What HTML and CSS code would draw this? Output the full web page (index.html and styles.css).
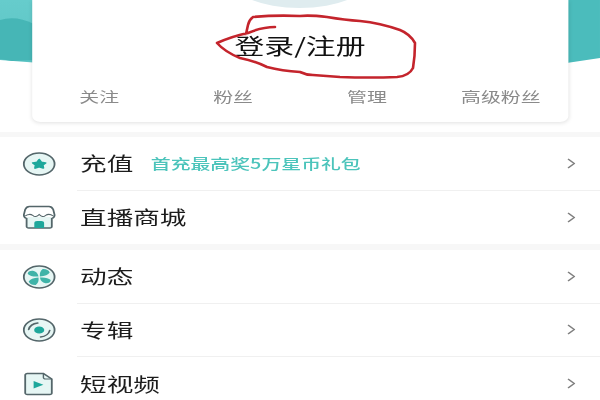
FILE: index.html
```html
<!DOCTYPE html>
<html lang="zh">
<head>
<meta charset="utf-8">
<title>我的</title>
<link rel="stylesheet" href="styles.css">
</head>
<body>
<div class="page">
  <header class="hero">
    <svg class="hero-bg" viewBox="0 0 600 70" preserveAspectRatio="none">
      <defs>
        <linearGradient id="lt" x1="0" y1="0" x2="0" y2="1">
          <stop offset="0" stop-color="#66cccc"/>
          <stop offset="1" stop-color="#5cc4c4"/>
        </linearGradient>
      </defs>
      <path d="M0 0H40V63L0 60Z" fill="url(#lt)"/>
      <path d="M0 20Q16 15 34 24V60L12 61L0 59Z" fill="#46b6b6"/>
      <path d="M560 0H600V58L560 64Z" fill="#4bbcbc"/>
    </svg>
    <div class="avatar"></div>
    <section class="card">
      <div class="title">登录/注册</div>
      <div class="stats">
        <span>关注</span>
        <span>粉丝</span>
        <span>管理</span>
        <span>高级粉丝</span>
      </div>
    </section>
  </header>

  <section class="group">
    <div class="row">
      <svg class="icon" viewBox="0 0 24 24">
        <circle class="ic-ring" cx="12" cy="12" r="11"/>
        <path class="ic-star" d="M12 7.500l1.500 2.800 3 .6-2 2.200.4 3-2.900-1.300-2.900 1.300.4-3-2-2.200 3-.6z"/>
      </svg>
      <div class="row-body">
        <span class="label">充值</span>
        <span class="promo">首充最高奖5万星币礼包</span>
        <svg class="chev" viewBox="0 0 8 14"><path d="M1 1l6 6-6 6"/></svg>
      </div>
    </div>
    <div class="row">
      <svg class="icon" viewBox="0 0 24 24">
        <path class="ic-fill" d="M3 12h18v9.500a1.500 1.500 0 0 1-1.500 1.500h-15a1.500 1.500 0 0 1-1.500-1.500z"/>
        <path class="ic-line" d="M5 1.500h14q2 0 3 3l1 5.500q0 2.500-2 3.500v8a1.500 1.500 0 0 1-1.500 1.500h-15a1.500 1.500 0 0 1-1.500-1.500v-8q-2-1-2-3.500l1-5.500q1-3 3-3z"/>
        <path class="ic-thin" d="M2 11q3-3 5.500-.5q2 2.500 4.500-1q2.500 3.500 4.500 1q2.500-2.500 5.500.5"/>
        <path class="ic-solid" d="M8.500 23v-5q0-2 2-2h3q2 0 2 2v5z"/>
      </svg>
      <div class="row-body row-last">
        <span class="label">直播商城</span>
        <svg class="chev" viewBox="0 0 8 14"><path d="M1 1l6 6-6 6"/></svg>
      </div>
    </div>
  </section>

  <section class="group">
    <div class="row">
      <svg class="icon" viewBox="0 0 24 24">
        <circle class="ic-ring" cx="12" cy="12" r="11"/>
        <path class="ic-soft" d="M11.500 11.500Q6 12 3.800 9Q4 5.500 7.500 5.800Q11 7 11.500 11.500z"/>
        <path class="ic-soft" d="M12.500 11.500Q12 6.500 14.500 4Q18.500 3.800 19.500 7.500Q18 11 12.500 11.500z"/>
        <path class="ic-soft" d="M12.500 12.500Q18 12 20.200 15Q20 18.500 16.500 18.200Q13 17 12.500 12.500z"/>
        <path class="ic-soft" d="M11.500 12.500Q12 17.500 9.500 20Q5.500 20.200 4.500 16.500Q6 13 11.500 12.500z"/>
      </svg>
      <div class="row-body">
        <span class="label">动态</span>
        <svg class="chev" viewBox="0 0 8 14"><path d="M1 1l6 6-6 6"/></svg>
      </div>
    </div>
    <div class="row">
      <svg class="icon" viewBox="0 0 24 24">
        <circle class="ic-ring" cx="12" cy="12" r="11"/>
        <path class="ic-arc" d="M4.500 11.500Q5.500 6 11 5"/>
        <path class="ic-arc" d="M19.500 12.500Q18.500 18 13 19"/>
        <circle class="ic-solid" cx="12" cy="12" r="3.600"/>
      </svg>
      <div class="row-body">
        <span class="label">专辑</span>
        <svg class="chev" viewBox="0 0 8 14"><path d="M1 1l6 6-6 6"/></svg>
      </div>
    </div>
    <div class="row">
      <svg class="icon" viewBox="0 0 24 24">
        <path class="ic-ring" d="M3.500 1.500h11.500l6 5.500v14a1.500 1.500 0 0 1-1.500 1.500h-16a1.500 1.500 0 0 1-1.500-1.500v-18a1.500 1.500 0 0 1 1.500-1.500z"/>
        <path class="ic-thin" d="M15 1.500v4a1.500 1.500 0 0 0 1.500 1.500h4.500"/>
        <path class="ic-solid" d="M8 9l7 3.800-7 3.800z"/>
      </svg>
      <div class="row-body">
        <span class="label">短视频</span>
        <svg class="chev" viewBox="0 0 8 14"><path d="M1 1l6 6-6 6"/></svg>
      </div>
    </div>
  </section>
</div>
<svg class="scribble" viewBox="0 0 600 400">
  <path d="M275 27Q262 27 248 33Q233 36 217 43Q225 52 240 58Q255 61 267 67Q282 71 300 72Q306 75 313 75Q326 76 340 77Q370 78 397 77Q409 76 413 68Q415 56 415 43Q410 34 400 30Q380 23 360 21Q345 20 327 17Q310 15 300 16Q275 15 253 17Q249 20 248 25L246 34"/>
</svg>
</body>
</html>
```
FILE: styles.css
```css
* { box-sizing: border-box; }
html, body { margin: 0; padding: 0; height: 400px; overflow: hidden; background: #fff; }
body {
  position: relative;
  font-family: "Noto Sans CJK SC", "Noto Sans", sans-serif;
  color: #1c1c1c;
}
.page {
  width: 428.57px;
  height: 400px;
  overflow: hidden;
  background: #f7f7f7;
  transform: scaleX(1.4);
  transform-origin: 0 0;
  filter: blur(0.3px);
}
.hero {
  position: relative;
  height: 132px;
  background: #fff;
  padding: 0 23px;
}
.hero-bg {
  position: absolute;
  left: 0;
  top: 0;
  width: 100%;
  height: 70px;
}
.card {
  position: relative;
  height: 122px;
  background: #fff;
  border-radius: 0 0 6px 6px;
  box-shadow: 0 1px 4px rgba(0, 0, 0, 0.12);
  display: flex;
  flex-direction: column;
  align-items: stretch;
  padding-top: 30px;
}
.avatar {
  position: absolute;
  z-index: 1;
  left: 50%;
  top: -52px;
  width: 100px;
  height: 60px;
  margin-left: -50px;
  border-radius: 50%;
  background: #dfecef;
}
.title {
  font-size: 21.300px;
  line-height: 30px;
  text-align: center;
  color: #111;
}
.stats {
  display: grid;
  grid-template-columns: repeat(4, 1fr);
  margin-top: 25px;
  font-size: 14.200px;
  line-height: 22px;
  text-align: center;
  color: #8a8a8a;
}
.group {
  margin-top: 5px;
  background: #fff;
}
.group + .group { margin-top: 6px; }
.row {
  display: flex;
  align-items: center;
  padding-left: 16px;
  height: 53.500px;
}
.icon {
  flex: none;
  width: 24px;
  height: 24px;
  margin-right: 15px;
}
.row-body {
  flex: 1;
  height: 100%;
  display: flex;
  align-items: center;
  padding-left: 2.200px;
  padding-right: 17.500px;
  border-bottom: 1px solid #f0f0f0;
}
.row:last-child .row-body { border-bottom: 0; }
.label { font-size: 19px; line-height: 26px; }
.promo {
  margin-left: 12.500px;
  font-size: 14.200px;
  font-weight: 500;
  color: #4cc4bb;
}
.chev {
  margin-left: auto;
  width: 6px;
  height: 13px;
  fill: none;
  stroke: #808080;
  stroke-width: 1.500;
}
.ic-ring { fill: #e6f6f4; stroke: #54666a; stroke-width: 1.300; }
.ic-fill { fill: #e6f6f4; }
.ic-line { fill: none; stroke: #54666a; stroke-width: 1.300; }
.ic-thin { fill: none; stroke: #54666a; stroke-width: 1; }
.ic-arc { fill: none; stroke: #54666a; stroke-width: 1.300; stroke-linecap: round; }
.ic-solid { fill: #1ea79b; }
.ic-star { fill: #1ea79b; stroke: #1ea79b; stroke-width: 1.500; stroke-linejoin: round; }
.ic-soft { fill: #3fb3a8; }
.scribble {
  position: absolute;
  left: 0;
  top: 0;
  width: 600px;
  height: 400px;
  fill: none;
  stroke: #c4242c;
  stroke-width: 2.600;
  stroke-linejoin: round;
  stroke-linecap: round;
}
```
